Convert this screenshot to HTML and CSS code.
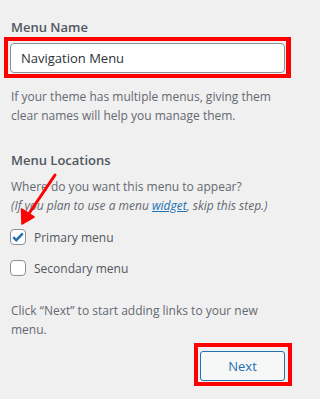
FILE: index.html
```html
<!DOCTYPE html>
<html>
<head>
<meta charset="utf-8">
<link rel="stylesheet" href="styles.css">
</head>
<body>
<div class="page">
  <div class="label">Menu Name</div>
  <div class="input">Navigation Menu</div>
  <p class="help">If your theme has multiple menus, giving them clear names will help you manage them.</p>
  <div class="label loc">Menu Locations</div>
  <p class="desc">Where do you want this menu to appear?<br><em>(If you plan to use a menu <a href="#">widget</a>, skip this step.)</em></p>
  <label class="check"><span class="box checked"><svg width="12" height="10" viewBox="0 0 12 10"><path d="M1.2 5.2 L4.3 8.2 L10.8 1.4" fill="none" stroke="#2271b1" stroke-width="2.4" stroke-linejoin="miter"/></svg></span>Primary menu</label>
  <label class="check"><span class="box"></span>Secondary menu</label>
  <p class="help next-help">Click “Next” to start adding links to your new menu.</p>
  <div class="actions"><button class="btn">Next</button></div>

  <div class="mark mark-input"></div>
  <div class="mark mark-btn"></div>
  <svg class="arrow" width="40" height="60" viewBox="0 0 40 60">
    <line x1="37" y1="3" x2="10" y2="43" stroke="#f00" stroke-width="3" stroke-linecap="round"/>
    <polygon points="4,52 3.5,37 16,45" fill="#f00" stroke="#f00" stroke-width="1.5" stroke-linejoin="round"/>
  </svg>
</div>
</body>
</html>
```
FILE: styles.css
```css
html, body {
  margin: 0;
  padding: 0;
  background: #f0f0f1;
}
.page {
  position: relative;
  width: 296px;
  height: 399px;
  box-sizing: border-box;
  padding: 17px 0 0 11px;
  font-family: "Open Sans", "Noto Sans", sans-serif;
  font-size: 12px;
  color: #50575e;
  overflow: hidden;
}
.label {
  font-size: 13px;
  font-weight: 600;
  line-height: 20px;
  color: #50575e;
}
.input {
  box-sizing: border-box;
  margin: 6px 0 0 -1px;
  width: 275px;
  height: 30px;
  border: 1px solid #8c8f94;
  border-radius: 4px;
  background: #fff;
  padding: 0 0 0 10px;
  font-size: 13px;
  line-height: 28px;
  color: #2c3338;
}
.help {
  margin: 14px 0 0;
  line-height: 19px;
  color: #646970;
  width: 275px;
}
.loc {
  margin-top: 25px;
}
.desc {
  margin: 7px 0 0;
  line-height: 19px;
  color: #646970;
}
.desc em {
  font-style: italic;
}
.desc a {
  color: #2271b1;
  text-decoration: underline;
}
.check {
  display: flex;
  align-items: center;
  gap: 8px;
  margin: 14px 0 0 -1px;
  height: 16px;
  font-size: 12px;
  color: #50575e;
}
.check + .check {
  margin-top: 15px;
}
.box {
  box-sizing: border-box;
  width: 16px;
  height: 16px;
  border: 1px solid #8c8f94;
  border-radius: 4px;
  background: #fff;
  display: flex;
  align-items: center;
  justify-content: center;
}
.next-help {
  margin-top: 25px;
}
.actions {
  display: flex;
  justify-content: flex-end;
  width: 274px;
  margin-top: 12px;
}
.btn {
  box-sizing: border-box;
  width: 85px;
  height: 30px;
  border: 1px solid #2271b1;
  border-radius: 3px;
  background: #f6f7f7;
  color: #2271b1;
  font-family: "Open Sans", "Noto Sans", sans-serif;
  font-size: 13px;
  line-height: 28px;
  padding: 0;
}
.mark {
  position: absolute;
  box-sizing: border-box;
  border: 4px solid #f00;
}
.mark-input {
  left: 4px;
  top: 37px;
  width: 287px;
  height: 41px;
  border-right-width: 5px;
}
.mark-btn {
  left: 194px;
  top: 343px;
  width: 98px;
  height: 43px;
}
.arrow {
  position: absolute;
  left: 18px;
  top: 172px;
}
```
